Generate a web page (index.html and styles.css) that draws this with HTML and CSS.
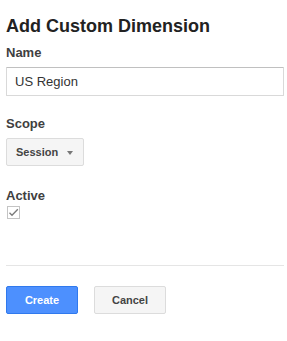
FILE: index.html
```html
<!DOCTYPE html>
<html lang="en">
<head>
    <meta charset="UTF-8">
    <title>Add Custom Dimension</title>
    <link rel="stylesheet" href="styles.css">
</head>
<body>

<div class="page">
    <h1 class="title">Add Custom Dimension</h1>

    <div class="field">
        <div class="label">Name</div>
        <input class="text-input" type="text" value="US Region">
    </div>

    <div class="field field-scope">
        <div class="label">Scope</div>
        <div class="select">
            <span>Session</span>
            <span class="arrow"></span>
        </div>
    </div>

    <div class="field field-active">
        <div class="label">Active</div>
        <div class="checkbox">
            <svg width="13" height="13" viewBox="0 0 13 13">
                <rect x="0.5" y="0.5" width="12" height="12" fill="#fff" stroke="#c4c4c4"/>
                <path d="M2.5 6.8 L5 9.3 L10.8 3.2" fill="none" stroke="#7a7a7a" stroke-width="1.3"/>
            </svg>
        </div>
    </div>

    <div class="divider"></div>

    <div class="buttons">
        <button class="btn btn-create">Create</button>
        <button class="btn btn-cancel">Cancel</button>
    </div>
</div>

</body>
</html>
```

FILE: styles.css
```css
body { margin: 0; background: #fff; font-family: "Liberation Sans", Arial, sans-serif; color: #222; }
.page { padding: 15px 3px 0 6px; }
.title { margin: 0; font-size: 18px; line-height: 22px; font-weight: bold; color: #222; }
.field { margin-top: 8px; }
.field-scope { margin-top: 20px; }
.field-active { margin-top: 22px; }
.label { font-size: 13px; line-height: 16px; font-weight: bold; color: #404040; margin-bottom: 6px; }
.field-active .label { margin-bottom: 2px; }
.text-input { display: block; box-sizing: border-box; width: 278px; height: 29px; margin: 0; padding: 0 8px; border: 1px solid #d9d9d9; border-top-color: #c0c0c0; border-radius: 1px; font-family: inherit; font-size: 13px; color: #333; outline: none; }
.select { box-sizing: border-box; width: 78px; height: 28px; display: flex; align-items: center; justify-content: space-between; padding: 0 10px 0 9px; background: #f5f5f5; border: 1px solid #dcdcdc; border-radius: 2px; font-size: 11px; font-weight: bold; color: #444; }
.arrow { width: 0; height: 0; border-left: 3.5px solid transparent; border-right: 3.5px solid transparent; border-top: 4px solid #777; margin-top: 2px; }
.checkbox { height: 13px; margin-left: 1px; }
.checkbox svg { display: block; }
.divider { height: 1px; background: #e5e5e5; margin: 46px 0 0 0; width: 278px; }
.buttons { display: flex; gap: 16px; margin-top: 20px; }
.btn { box-sizing: border-box; width: 72px; height: 28px; border-radius: 2px; font-family: inherit; font-size: 11px; font-weight: bold; padding: 0; cursor: pointer; }
.btn-create { background: #4d90fe; border: 1px solid #3079ed; color: #fff; }
.btn-cancel { background: #f5f5f5; border: 1px solid #dcdcdc; color: #444; }
```
